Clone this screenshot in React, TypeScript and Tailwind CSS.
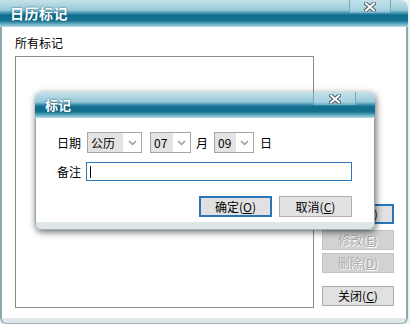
import type { ReactNode } from 'react';

const FONT = "font-['Noto_Sans_CJK_SC','Noto_Sans',sans-serif]";
const TITLE_BG =
  'bg-[linear-gradient(to_bottom,#c6e2eb_0%,#97c9d8_38%,#3a8eab_49%,#0f6d8e_57%,#15738f_76%,#62abc2_89%,#b7dbe5_100%)]';

function CloseGlyph() {
  return (
    <svg width="12" height="10" viewBox="0 0 12 10">
      <path d="M2 1.5 L10 8.5 M10 1.5 L2 8.5" stroke="#4d5d63" strokeWidth="4" strokeLinecap="square" />
      <path d="M2 1.5 L10 8.5 M10 1.5 L2 8.5" stroke="#ffffff" strokeWidth="2" strokeLinecap="square" />
    </svg>
  );
}

function Mnemonic({ label, k }: { label: string; k: string }) {
  return (
    <>
      {label}(<span className="underline">{k}</span>)
    </>
  );
}

function Select({ value, w, textW }: { value: string; w: string; textW: string }) {
  return (
    <div className={`flex h-[21px] border border-[#a6a6a6] bg-white ${w}`}>
      <div className={`flex items-center bg-[#e3e3e3] pl-[3px] text-[12px] text-black ${textW}`}>{value}</div>
      <div className="flex flex-1 items-center justify-center">
        <svg width="9" height="6" viewBox="0 0 9 6">
          <path d="M1 1 L4.5 4.5 L8 1" fill="none" stroke="#9a9a9a" strokeWidth="1.5" />
        </svg>
      </div>
    </div>
  );
}

function SideButton({ children, disabled, focused }: { children: ReactNode; disabled?: boolean; focused?: boolean }) {
  const cls = disabled
    ? 'bg-[#d2d2d2] border-[#c4c4c4] text-[#aaaaaa] [text-shadow:1px_1px_0_#ffffff]'
    : focused
      ? 'bg-[#e1e1e1] border-[#2a74b8] border-2 text-black'
      : 'bg-[#e1e1e1] border-[#adadad] text-black';
  return (
    <div className={`flex h-[20px] w-[72px] items-center justify-center border text-[12px] ${cls}`}>{children}</div>
  );
}

export default function App() {
  return (
    <div className={`relative h-[324px] w-[410px] overflow-hidden bg-[#eef1f2] ${FONT}`}>
      {/* main window */}
      <div className="flex h-full w-[408px] flex-col">
        <div className={`relative h-[27px] rounded-tr-[8px] ${TITLE_BG}`}>
          <span className="absolute left-[10px] top-[5px] text-[14px] font-bold leading-[17px] tracking-[0.5px] text-white [text-shadow:0_0_2px_#0d4f66]">
            日历标记
          </span>
          <div className="absolute left-[349px] top-0 flex h-[13px] w-[42px] items-center justify-center border-x border-[#6fa9bc] bg-[#bfe0ea]/40">
            <CloseGlyph />
          </div>
        </div>
        <div className="flex flex-1 border-x-2 border-[#8ea8ae] bg-white">
          <div className="flex flex-col pl-[13px] pt-[8px]">
            <span className="text-[12px] leading-[16px] text-black">所有标记</span>
            <div className="mt-[5px] h-[252px] w-[299px] border border-[#8a8a8a]" />
          </div>
          <div className="ml-[8px] flex flex-col pt-[177px]">
            <SideButton focused>
              <Mnemonic label="添加" k="A" />
            </SideButton>
            <div className="mt-[6px]">
              <SideButton disabled>
                <Mnemonic label="修改" k="E" />
              </SideButton>
            </div>
            <div className="mt-[3px]">
              <SideButton disabled>
                <Mnemonic label="删除" k="D" />
              </SideButton>
            </div>
            <div className="mt-[13px]">
              <SideButton>
                <Mnemonic label="关闭" k="C" />
              </SideButton>
            </div>
          </div>
        </div>
        <div className="h-[6px] rounded-b-[6px] border-x-2 border-b border-[#9fb4b9] bg-[#dfe6e8]" />
      </div>

      {/* modal dialog */}
      <div className="absolute left-[35px] top-[92px] flex h-[138px] w-[340px] flex-col overflow-hidden rounded-t-[6px] rounded-b-[6px] bg-white shadow-[1px_2px_7px_rgba(0,0,0,0.6)]">
        <div className={`relative h-[26px] ${TITLE_BG}`}>
          <span className="absolute left-[10px] top-[5px] text-[13px] font-bold leading-[16px] text-white [text-shadow:0_0_2px_#0d4f66]">
            标记
          </span>
          <div className="absolute left-[278px] top-0 flex h-[13px] w-[43px] items-center justify-center border-x border-[#6fa9bc] bg-[#bfe0ea]/40">
            <CloseGlyph />
          </div>
        </div>
        <div className="flex flex-1 flex-col border-x border-[#8fa3a8] pl-[21px] pt-[14px]">
          <div className="flex items-center text-[12px] text-black">
            <span className="w-[30px]">日期</span>
            <Select value="公历" w="w-[55px]" textW="w-[35px]" />
            <div className="ml-[8px]">
              <Select value="07" w="w-[41px]" textW="w-[22px]" />
            </div>
            <span className="ml-[5px]">月</span>
            <div className="ml-[6px]">
              <Select value="09" w="w-[40px]" textW="w-[21px]" />
            </div>
            <span className="ml-[6px]">日</span>
          </div>
          <div className="mt-[9px] flex items-center text-[12px] text-black">
            <span className="w-[29px]">备注</span>
            <div className="flex h-[19px] w-[266px] items-center border border-[#2f78b5] pl-[3px]">
              <div className="h-[12px] w-px bg-black" />
            </div>
          </div>
          <div className="mt-[15px] flex w-[295px] justify-end gap-[7px] text-[12px] text-black">
            <div className="flex h-[21px] w-[73px] items-center justify-center border-2 border-[#2a74b8] bg-[#e1e1e1]">
              <Mnemonic label="确定" k="O" />
            </div>
            <div className="flex h-[21px] w-[73px] items-center justify-center border border-[#adadad] bg-[#e1e1e1]">
              <Mnemonic label="取消" k="C" />
            </div>
          </div>
        </div>
        <div className="h-[8px] rounded-b-[6px] border-x border-b border-[#9fb4b9] bg-[#dfe6e8]" />
      </div>
    </div>
  );
}
